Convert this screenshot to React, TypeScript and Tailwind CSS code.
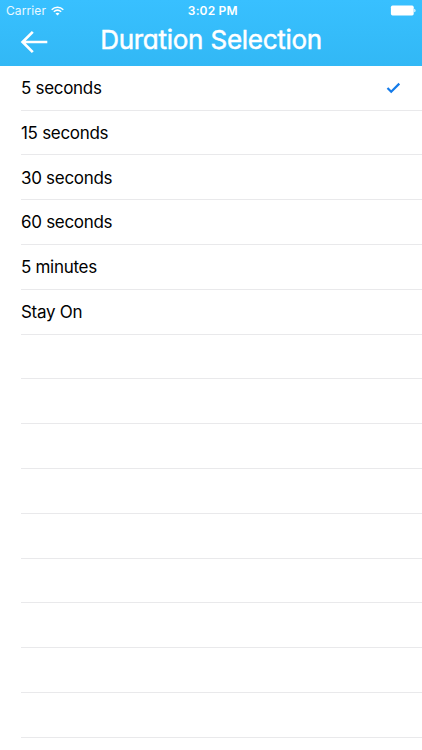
import React, { useState } from 'react'

const durations = ['5 seconds', '15 seconds', '30 seconds', '60 seconds', '5 minutes', 'Stay On']
const emptyRows = 10

function StatusBar() {
    return (
        <div className="grid grid-cols-3 items-center h-[22px] pl-[6px] pr-[5.5px] text-[12px] leading-[22px]">
            <div className="flex items-center gap-[5px]">
                <span className="tracking-[0.1px] text-white/90">Carrier</span>
                <svg className="-mt-px" width="13" height="10" viewBox="0 0 13 10" fill="none" stroke="white" strokeWidth="1.5">
                    <path d="M0.7 3.7C4 0.4 9 0.4 12.3 3.7" />
                    <path d="M2.8 5.8C5 3.8 8 3.8 10.2 5.8" />
                    <path d="M6.5 9.5L4.5 7.4C5.7 6.4 7.3 6.4 8.5 7.4Z" fill="white" stroke="none" />
                </svg>
            </div>
            <span className="pl-[3px] text-center font-semibold whitespace-nowrap tracking-[0.15px]">3:02 PM</span>
            <svg className="justify-self-end -mt-px" width="26" height="11" viewBox="0 0 26 11" fill="white">
                <rect x="0.9" y="0.6" width="22.8" height="9.8" rx="1.6" />
                <path d="M24.3 3.7C25.9 4 25.9 7 24.3 7.3Z" />
            </svg>
        </div>
    )
}

export default function App() {
    const [selected, setSelected] = useState('5 seconds')

    return (
        <main className="w-full h-[750px] overflow-hidden bg-white font-['Inter',sans-serif]">
            <header className="h-[65.9px] text-white bg-linear-to-b from-[#38c0ff] to-[#32b8f5]">
                <StatusBar />
                <div className="grid grid-cols-[60px_1fr_60px] items-start h-[40px]">
                    <button type="button" aria-label="Back" className="pl-[20px] pt-[8px]">
                        <svg className="block" width="28" height="24" viewBox="0 0 28 24" fill="none" stroke="white" strokeWidth="2.7">
                            <path d="M12.8 1.9L2.6 12L12.8 22.1M2.6 12H27.3" />
                        </svg>
                    </button>
                    <h1 className="text-center whitespace-nowrap text-[26px] leading-[36px] font-normal tracking-[-0.3px] [word-spacing:0.5px] [-webkit-text-stroke:0.5px_white] [font-feature-settings:'cv11']">
                        Duration Selection
                    </h1>
                </div>
            </header>
            <ul>
                {durations.map((label) => (
                    <li
                        key={label}
                        onClick={() => setSelected(label)}
                        className="flex items-center justify-between h-[44.8px] ml-[21px] pt-[2px] pr-[21px] border-b border-[#e9e9eb] text-[17px] tracking-[-0.3px] text-black"
                    >
                        <span>{label}</span>
                        {selected === label && (
                            <svg className="-mt-[2px]" width="15" height="12" viewBox="0 0 15 12" fill="none" stroke="#147be9" strokeWidth="2.2">
                                <path d="M1.5 6L5.2 9.7L13.3 1.6" />
                            </svg>
                        )}
                    </li>
                ))}
                {Array.from({ length: emptyRows }, (_, i) => (
                    <li key={i} className="h-[44.8px] ml-[21px] border-b border-[#e9e9eb]" />
                ))}
            </ul>
        </main>
    )
}
